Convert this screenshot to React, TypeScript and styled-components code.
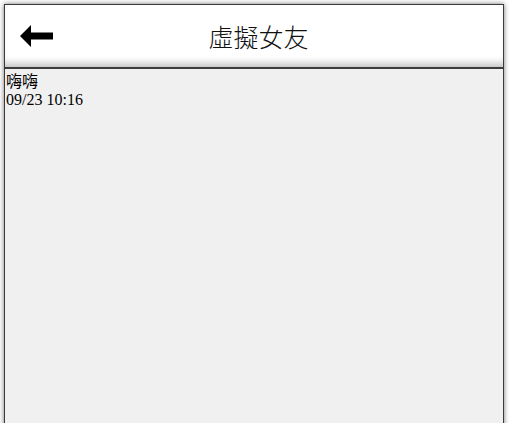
import styled, { createGlobalStyle } from "styled-components"

const GlobalStyle = createGlobalStyle`
  html, body {
    margin: 0;
    padding: 0;
    background: #ffffff;
    overflow: hidden;
  }
  body {
    padding: 4px;
  }
`;

const Phone = styled.div`
  width: 500px;
  height: 460px;
  box-sizing: border-box;
  border: 1px solid #3a3a3a;
  box-shadow: 0 0 5px rgba(0, 0, 0, 0.55);
  display: flex;
  flex-direction: column;
  background: #f0f0f0;
`;

const Header = styled.header`
  height: 64px;
  box-sizing: border-box;
  background: #ffffff;
  border-bottom: 2px solid #3c3c3c;
  box-shadow: inset 0 -9px 8px -6px rgba(0, 0, 0, 0.28);
  display: grid;
  grid-template-columns: 60px 1fr 60px;
  align-items: center;
`;

const BackButton = styled.button`
  background: none;
  border: none;
  padding: 0 0 0 15px;
  margin: 0;
  height: 100%;
  display: flex;
  align-items: center;
  cursor: pointer;
`;

const Title = styled.h1`
  margin: 0;
  padding: 0 0 0 9px;
  text-align: center;
  font-family: "Noto Sans CJK TC", "Noto Sans", sans-serif;
  font-size: 25px;
  font-weight: 300;
  color: #111;
`;

const Messages = styled.main`
  flex: 1;
  padding: 1px 0 0 1px;
  font-family: "Liberation Serif", "Noto Sans CJK TC", serif;
  font-size: 16px;
  color: #000;
`;

const Message = styled.div`
  display: flex;
  flex-direction: column;
`;

const MessageText = styled.div`
  font-family: "Noto Sans CJK TC", sans-serif;
  font-size: 16px;
  line-height: 21px;
`;

const MessageTime = styled.div`
  line-height: 18px;
`;

function BackArrow() {
  return (
    <svg width="34" height="24" viewBox="0 0 34 24">
      <polygon points="0,12 11,1 11,8.5 33,8.5 33,15.5 11,15.5 11,23" fill="#000" />
    </svg>
  )
}

export default function App() {
  return (
    <>
      <GlobalStyle />
      <Phone>
        <Header>
          <BackButton aria-label="back">
            <BackArrow />
          </BackButton>
          <Title>虛擬女友</Title>
          <span />
        </Header>
        <Messages>
          <Message>
            <MessageText>嗨嗨</MessageText>
            <MessageTime>09/23 10:16</MessageTime>
          </Message>
        </Messages>
      </Phone>
    </>
  )
}
